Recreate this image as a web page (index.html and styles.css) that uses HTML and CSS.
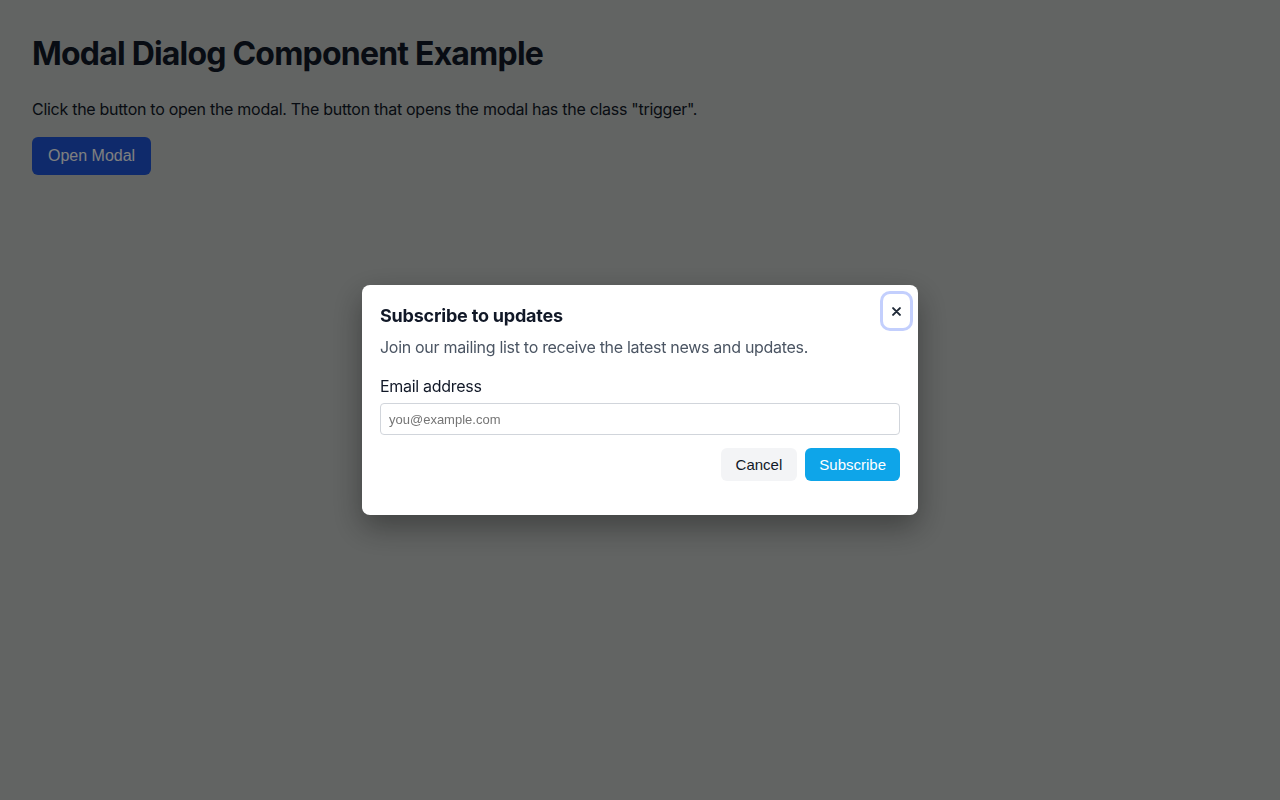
FILE: index.html
```html
<!DOCTYPE html>
<html lang="en">
<head>
<meta charset="utf-8">
<title>Modal Dialog Component Example</title>
<link rel="stylesheet" href="styles.css">
</head>
<body>
<main class="page">
  <h1 class="title">Modal Dialog Component Example</h1>
  <p class="intro">Click the button to open the modal. The button that opens the modal has the class "trigger".</p>
  <button class="trigger" type="button">Open Modal</button>
</main>
<div class="overlay">
  <div class="modal" role="dialog" aria-labelledby="modal-title">
    <button class="close" type="button" aria-label="Close">
      <svg width="9" height="9" viewBox="0 0 10 10" aria-hidden="true"><path d="M1.2 1.2L8.8 8.8M8.8 1.2L1.2 8.8" stroke="#1f2937" stroke-width="2.2" stroke-linecap="round"/></svg>
    </button>
    <h2 class="modal-title" id="modal-title">Subscribe to updates</h2>
    <p class="modal-desc">Join our mailing list to receive the latest news and updates.</p>
    <label class="field-label" for="email">Email address</label>
    <input class="field-input" id="email" type="email" placeholder="you@example.com">
    <div class="actions">
      <button class="btn btn-cancel" type="button">Cancel</button>
      <button class="btn btn-primary" type="button">Subscribe</button>
    </div>
  </div>
</div>
</body>
</html>
```
FILE: styles.css
```css
html, body {
  margin: 0;
  height: 100%;
}
body {
  background: #c4c8c6;
  font-family: Inter, "Liberation Sans", sans-serif;
  color: #111827;
}
.page {
  padding: 34px 32px;
}
.title {
  margin: 0 0 23px;
  font-size: 32px;
  line-height: 40px;
  font-weight: 700;
  letter-spacing: -0.8px;
  color: #111827;
}
.intro {
  margin: 0 0 16px;
  font-size: 16px;
  line-height: 24px;
  letter-spacing: -0.28px;
}
.trigger {
  font-family: "Liberation Sans", Arial, sans-serif;
  font-size: 16px;
  line-height: 22px;
  padding: 8px 16px;
  border: 0;
  border-radius: 6px;
  background: #1e54d6;
  color: #ffffff;
}
.overlay {
  position: fixed;
  inset: 0;
  background: rgba(0, 0, 0, 0.5);
  display: flex;
  align-items: center;
  justify-content: center;
}
.modal {
  position: relative;
  width: 556px;
  box-sizing: border-box;
  padding: 16px 18px 34px;
  background: #ffffff;
  border-radius: 8px;
  box-shadow: 0 12px 30px rgba(0, 0, 0, 0.35);
  display: flex;
  flex-direction: column;
}
.close {
  position: absolute;
  top: 9px;
  right: 8px;
  width: 27px;
  height: 34px;
  padding: 0;
  border: 0;
  background: #ffffff;
  border-radius: 7px;
  box-shadow: 0 0 0 3px #c3cffd;
  display: flex;
  align-items: center;
  justify-content: center;
}
.modal-title {
  margin: 1px 0 0;
  font-size: 18px;
  line-height: 28px;
  font-weight: 700;
  letter-spacing: -0.2px;
  color: #111827;
}
.modal-desc {
  margin: 5px 0 0;
  font-size: 16px;
  line-height: 24px;
  letter-spacing: -0.3px;
  color: #4b5563;
}
.field-label {
  margin-top: 15px;
  font-size: 16px;
  line-height: 24px;
  letter-spacing: -0.3px;
  color: #111827;
}
.field-input {
  margin-top: 5px;
  height: 32px;
  box-sizing: border-box;
  border: 1px solid #d1d5db;
  border-radius: 4px;
  padding: 0 8px;
  font-family: "Liberation Sans", Arial, sans-serif;
  font-size: 13px;
  color: #111827;
}
.field-input::placeholder {
  color: #757575;
}
.actions {
  margin-top: 13px;
  display: flex;
  justify-content: flex-end;
  gap: 8px;
}
.btn {
  height: 33px;
  padding: 0 14px;
  border: 0;
  border-radius: 6px;
  font-family: "Liberation Sans", Arial, sans-serif;
  font-size: 15px;
}
.btn-cancel {
  padding: 0 15px;
  background: #f3f4f6;
  color: #111827;
}
.btn-primary {
  background: #0ea5e9;
  color: #ffffff;
}
```
